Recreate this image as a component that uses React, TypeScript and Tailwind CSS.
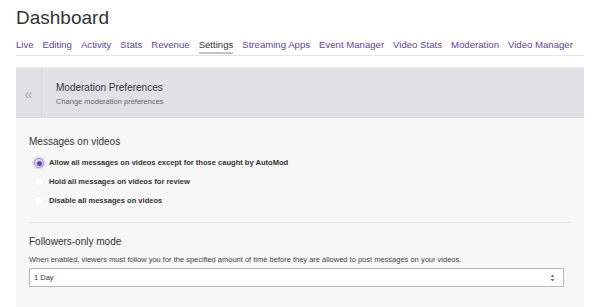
import React from "react";

const tabs = [
  "Live",
  "Editing",
  "Activity",
  "Stats",
  "Revenue",
  "Settings",
  "Streaming Apps",
  "Event Manager",
  "Video Stats",
  "Moderation",
  "Video Manager",
];

const options = [
  "Allow all messages on videos except for those caught by AutoMod",
  "Hold all messages on videos for review",
  "Disable all messages on videos",
];

export default function App() {
  return (
    <div
      className="w-[600px] h-[307px] overflow-hidden bg-white px-4"
      style={{ fontFamily: '"Liberation Sans", Arial, sans-serif' }}
    >
      <h1 className="pt-[6px] text-[19px] leading-[23px] text-[#333]">Dashboard</h1>
      <nav className="mt-[9px] flex gap-[9px] whitespace-nowrap border-b border-[#e6e6e6] pb-[1px]">
        {tabs.map((t) => (
          <span
            key={t}
            className={
              "text-[9.6px] leading-[14px] border-b-2 " +
              (t === "Settings"
                ? "text-[#333] border-[#c4c4c4]"
                : "text-[#6441a4] border-transparent")
            }
          >
            {t}
          </span>
        ))}
      </nav>
      <div className="mt-[11px]">
        <div className="flex h-[51px] bg-[#e3e1e8] border-t border-[#ebe9ef] border-b border-b-[#dddbe2]">
          <div className="flex w-[26px] items-center justify-center border-r border-[#d6d4dc] text-[14px] text-[#aaa] pt-[4px]">
            «
          </div>
          <div className="pl-[14px] pt-[13px]">
            <div className="text-[10px] leading-[13px] text-[#333]">Moderation Preferences</div>
            <div className="mt-[3px] text-[7.5px] leading-[10px] text-[#666]">
              Change moderation preferences
            </div>
          </div>
        </div>
        <div className="h-[200px] bg-[#f7f7f7] pl-[13px] pr-[14px] pt-[17px]">
          <div className="text-[10px] leading-[14px] text-[#333]">Messages on videos</div>
          <div className="mt-[8px] flex flex-col gap-[7px] pl-[5px]">
            {options.map((o, i) => (
              <div key={o} className="flex h-[12px] items-center gap-[5px]">
                {i === 0 ? (
                  <span className="flex h-[10px] w-[10px] items-center justify-center rounded-full border border-[#a898cf] bg-[#ddd5ee] shadow-[0_0_2px_1px_rgba(140,110,200,0.35)]">
                    <span className="h-[5px] w-[5px] rounded-full bg-[#6441a4]" />
                  </span>
                ) : (
                  <span className="h-[10px] w-[10px] rounded-full border border-[#f0f0f0] bg-white" />
                )}
                <span className="text-[7.55px] font-bold text-[#333]">{o}</span>
              </div>
            ))}
          </div>
          <div className="mt-[15px] border-t border-[#e6e6e6]" />
          <div className="mt-[12px] text-[10px] leading-[14px] text-[#333]">Followers-only mode</div>
          <div className="mt-[6px] text-[7.5px] leading-[10px] text-[#444]">
            When enabled, viewers must follow you for the specified amount of time before they are allowed to post messages on your videos.
          </div>
          <div className="mt-[3px] mr-[6px] flex h-[19px] items-center justify-between border border-[#b9b5c6] bg-white pl-[4px] pr-[8px]">
            <span className="text-[7.5px] text-[#333]">1 Day</span>
            <svg width="5" height="8" viewBox="0 0 5 8" className="text-[#777]">
              <path d="M2.5 0.5 L4.5 3 L0.5 3 Z" fill="currentColor" />
              <path d="M2.5 7.5 L4.5 5 L0.5 5 Z" fill="currentColor" />
            </svg>
          </div>
        </div>
      </div>
    </div>
  );
}
